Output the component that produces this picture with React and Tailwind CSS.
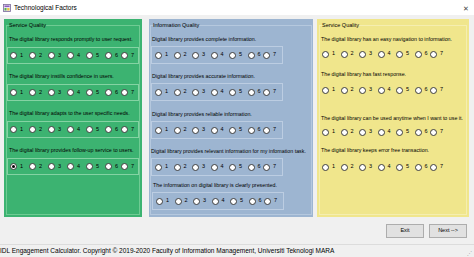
import React from "react";

const greenQuestions = [
    "The digital library responds promptly to user request.",
    "The digital library instills confidence in users.",
    "The digital library adapts to the user specific needs.",
    "The digital library provides follow-up service to users.",
];

const blueQuestions = [
    { text: "Digital library provides complete information.", gap: "mt-0", indent: "pl-[1px]" },
    { text: "Digital library provides accurate information.", gap: "mt-[8px]", indent: "pl-[1px]" },
    { text: "Digital library provides reliable information.", gap: "mt-[9px]", indent: "pl-[1px]" },
    { text: "Digital library provides relevant information for my infomation task.", gap: "mt-[8px]", indent: "pl-0" },
    { text: "The information on digital library is clearly presented.", gap: "mt-[5px]", indent: "pl-[2px]" },
];

const yellowQuestions = [
    { text: "The digital library has an easy navigation to information.", top: "mt-0", inner: "mt-[7px]" },
    { text: "The digital library has fast response.", top: "mt-[12px]", inner: "mt-[8px]" },
    { text: "The digital library can be used anytime when I want to use it.", top: "mt-[20px]", inner: "mt-[6px]" },
    { text: "The digital library keeps error free transaction.", top: "mt-[10px]", inner: "mt-[9px]" },
];

const greenWidths = ["w-[19px]", "w-[19px]", "w-[19px]", "w-[19px]", "w-[19px]", "w-[16px]", "w-auto"];
const otherWidths = ["w-[18.5px]", "w-[18.5px]", "w-[18.5px]", "w-[18.5px]", "w-[18.5px]", "w-[15.5px]", "w-auto"];

const Radio = ({ n, width, checked }) => (
    <div className={`flex items-center shrink-0 ${width}`}>
        <span className="flex items-center justify-center w-[7px] h-[7px] rounded-full border border-[#3c3c3c] bg-white">
            {checked && <span className="w-[3px] h-[3px] rounded-full bg-black" />}
        </span>
        <span className="ml-[3px] text-[5.5px] leading-none text-black">{n}</span>
    </div>
);

const RadioRow = ({ widths, checked }) => (
    <div className="flex items-center">
        {[1, 2, 3, 4, 5, 6, 7].map((n, i) => (
            <Radio key={n} n={n} width={widths[i]} checked={checked === n} />
        ))}
    </div>
);

const Legend = ({ children }) => (
    <legend className="ml-[2px] text-[5.5px] leading-[8px] text-black">{children}</legend>
);

const GreenPanel = () => (
    <div className="flex w-[138px] h-full bg-[#3cb371] px-[2px] pt-[2px] pb-[2px]">
        <fieldset className="flex-1 border border-[#6fcb93]">
            <Legend>Service Quality</Legend>
            <div className="flex flex-col pt-[6px]">
                {greenQuestions.map((q, i) => (
                    <div key={i} className={i === 0 ? "" : "mt-[8px]"}>
                        <p className="h-[8px] pl-[2px] text-[5.3px] leading-[8px] text-black whitespace-nowrap">
                            {q}
                        </p>
                        <div className="flex items-center h-[17px] mt-[4px] pl-[2px] border border-[#84d3a3]">
                            <RadioRow widths={greenWidths} checked={i === 3 ? 1 : null} />
                        </div>
                    </div>
                ))}
            </div>
        </fieldset>
    </div>
);

const BluePanel = () => (
    <div className="flex w-[164px] h-full bg-[#9db5d1] px-[1px] pt-[2px] pb-[2px]">
        <fieldset className="flex-1 border border-[#b5c8de]">
            <Legend>Information Quality</Legend>
            <div className="flex flex-col pt-[6px]">
                {blueQuestions.map((q, i) => (
                    <div key={i} className={q.gap}>
                        <p className={`h-[8px] text-[5.3px] leading-[8px] text-black whitespace-nowrap ${q.indent}`}>
                            {q.text}
                        </p>
                        <div className={`flex items-center w-[132px] h-[18px] mt-[3px] pl-[3px] border border-[#bccde2] ${i === 4 ? "ml-[1px]" : ""}`}>
                            <RadioRow widths={otherWidths} />
                        </div>
                    </div>
                ))}
            </div>
        </fieldset>
    </div>
);

const YellowPanel = () => (
    <div className="flex w-[152px] h-full bg-[#f0e68c] px-[2px] pt-[2px] pb-[2px]">
        <fieldset className="flex-1 border border-[#f5eeb0]">
            <Legend>Service Quality</Legend>
            <div className="flex flex-col pt-[6px]">
                {yellowQuestions.map((q, i) => (
                    <div key={i} className={q.top}>
                        <p className="h-[8px] pl-[1px] text-[5.3px] leading-[8px] text-black whitespace-nowrap">
                            {q.text}
                        </p>
                        <div className={`flex items-center h-[8px] pl-[2px] ${q.inner}`}>
                            <RadioRow widths={otherWidths} />
                        </div>
                    </div>
                ))}
            </div>
        </fieldset>
    </div>
);

const AppIcon = () => (
    <svg width="8" height="8" viewBox="0 0 8 8">
        <rect x="0.5" y="0.5" width="7" height="7" fill="#e8e0f0" stroke="#7a6a9a" strokeWidth="0.8" />
        <rect x="1.5" y="1.5" width="5" height="1.5" fill="#8a5cc0" />
        <rect x="1.5" y="4" width="2" height="2.5" fill="#58b050" />
        <rect x="4.2" y="4" width="2.3" height="2.5" fill="#e8c840" />
    </svg>
);

const Button = ({ children }) => (
    <button className="flex items-center justify-center w-[38px] h-[14px] bg-[#e1e1e1] border border-[#adadad] text-[5.5px] text-black leading-none">
        {children}
    </button>
);

export default function App() {
    return (
        <div className="flex flex-col w-[474px] h-[257px] overflow-hidden bg-[#f0f0f0] font-['Liberation_Sans',Arial,sans-serif]">
            <div className="flex items-center h-[15px] bg-white pl-[3px] pr-[5px] pt-[1px] shrink-0">
                <AppIcon />
                <span className="ml-[3px] text-[6.5px] leading-none text-black">Technological Factors</span>
                <span className="ml-auto text-[7px] leading-none text-[#444]">✕</span>
            </div>

            <div className="flex h-[198px] mt-[4px] pl-[4px] shrink-0">
                <GreenPanel />
                <div className="ml-[7px] h-full">
                    <BluePanel />
                </div>
                <div className="ml-[4px] h-full">
                    <YellowPanel />
                </div>
            </div>

            <div className="flex justify-end gap-[5px] h-[14px] mt-[7px] pr-[7px] shrink-0">
                <Button>Exit</Button>
                <Button>Next --&gt;</Button>
            </div>

            <div className="flex items-center h-[13px] mt-[6px] border-t border-[#dcdcdc] shrink-0">
                <span className="text-[6.5px] leading-none text-black whitespace-nowrap">
                    IDL Engagement Calculator. Copyright © 2019-2020 Faculty of Information Management, Universiti Teknologi MARA
                </span>
                <span className="ml-auto mr-[2px] mt-[4px] text-[5px] leading-none text-[#a0a0a0]">⋰</span>
            </div>
        </div>
    );
}
